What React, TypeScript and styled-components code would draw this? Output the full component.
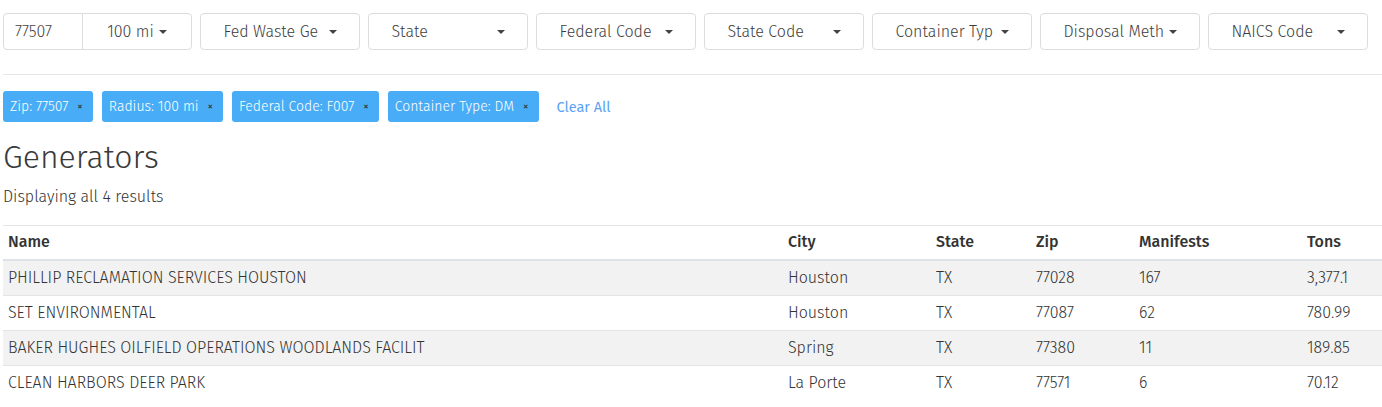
import React from "react";
import styled, { createGlobalStyle } from "styled-components";

const GlobalStyle = createGlobalStyle`
  html, body {
    margin: 0;
    padding: 0;
    background: #fff;
  }
  body {
    font-family: "Fira Sans", "Noto Sans", "Open Sans", sans-serif;
    color: #444;
    overflow: hidden;
  }
`;

interface Generator {
  name: string;
  city: string;
  state: string;
  zip: string;
  manifests: number;
  tons: string;
}

const generators: Generator[] = [
  { name: "PHILLIP RECLAMATION SERVICES HOUSTON", city: "Houston", state: "TX", zip: "77028", manifests: 167, tons: "3,377.1" },
  { name: "SET ENVIRONMENTAL", city: "Houston", state: "TX", zip: "77087", manifests: 62, tons: "780.99" },
  { name: "BAKER HUGHES OILFIELD OPERATIONS WOODLANDS FACILIT", city: "Spring", state: "TX", zip: "77380", manifests: 11, tons: "189.85" },
  { name: "CLEAN HARBORS DEER PARK", city: "La Porte", state: "TX", zip: "77571", manifests: 6, tons: "70.12" },
];

const filters = ["Fed Waste Ge", "State", "Federal Code", "State Code", "Container Typ", "Disposal Meth", "NAICS Code"];

const chips = ["Zip: 77507", "Radius: 100 mi", "Federal Code: F007", "Container Type: DM"];

const columns = [
  { label: "Name", width: 780 },
  { label: "City", width: 148 },
  { label: "State", width: 100 },
  { label: "Zip", width: 103 },
  { label: "Manifests", width: 168 },
  { label: "Tons", width: 80 },
];

const Page = styled.div`
  padding: 13px 0 0 3px;
`;

const FilterBar = styled.div`
  display: flex;
  gap: 8px;
`;

const ZipGroup = styled.div`
  display: flex;
`;

const ZipInput = styled.div`
  width: 80px;
  height: 37px;
  box-sizing: border-box;
  border: 1px solid #dcdcdc;
  border-radius: 4px 0 0 4px;
  font-size: 16px;
  font-weight: 300;
  line-height: 35px;
  padding-left: 11px;
  color: #444;
`;

const DropButton = styled.button<{ $joined?: boolean; $w: number }>`
  width: ${(p) => p.$w}px;
  height: 37px;
  box-sizing: border-box;
  background: #fff;
  border: 1px solid #dcdcdc;
  border-radius: ${(p) => (p.$joined ? "0 4px 4px 0" : "4px")};
  margin-left: ${(p) => (p.$joined ? "-1px" : "0")};
  display: flex;
  align-items: center;
  justify-content: center;
  gap: 5px;
  padding: 0;
  font-family: inherit;
  font-size: 16px;
  font-weight: 300;
  color: #3d3d3d;
`;

const ButtonLabel = styled.span<{ $fixed?: boolean }>`
  display: inline-block;
  width: ${(p) => (p.$fixed ? "100px" : "auto")};
  white-space: nowrap;
  overflow: hidden;
  text-align: left;
`;

const Caret = styled.span`
  width: 0;
  height: 0;
  border-top: 4.5px solid #444;
  border-left: 4px solid transparent;
  border-right: 4px solid transparent;
  margin-top: 1px;
`;

const Rule = styled.hr`
  border: 0;
  border-top: 1px solid #e6e6e6;
  margin: 24px 0 0;
`;

const ChipRow = styled.div`
  display: flex;
  align-items: center;
  gap: 9px;
  margin-top: 16px;
`;

const Chip = styled.span`
  display: inline-flex;
  align-items: center;
  height: 31px;
  padding: 0 10px 0 7px;
  background: #48acf6;
  border-radius: 3px;
  color: #fff;
  font-size: 14px;
  font-weight: 300;
`;

const ChipClose = styled.span`
  margin-left: 9px;
  font-size: 11px;
  font-weight: 400;
  color: #333;
`;

const ClearAll = styled.a`
  margin-left: 9px;
  color: #5aa2f5;
  font-size: 14.5px;
  text-decoration: none;
`;

const Title = styled.h1`
  margin: 15px 0 0;
  font-size: 32px;
  font-weight: 300;
  line-height: 40px;
  color: #3a3a3a;
`;

const Summary = styled.p`
  margin: 10px 0 0;
  font-size: 16px;
  font-weight: 300;
  line-height: 20px;
  color: #333;
`;

const Table = styled.table`
  margin-top: 18px;
  width: 1379px;
  border-collapse: collapse;
  table-layout: fixed;
  font-size: 16px;
`;

const HeadCell = styled.th`
  text-align: left;
  font-weight: 500;
  color: #333;
  padding: 7px 5px 8px;
  line-height: 18px;
  border-top: 1px solid #e2e4e6;
  border-bottom: 2px solid #dee2e6;
`;

const Row = styled.tr<{ $striped: boolean }>`
  background: ${(p) => (p.$striped ? "#f2f2f2" : "#fff")};
`;

const Cell = styled.td`
  padding: 8px 5px;
  line-height: 18px;
  font-weight: 300;
  color: #333;
  border-top: 1px solid #e2e4e6;
  white-space: nowrap;
  overflow: hidden;
`;

export default function App() {
  return (
    <Page>
      <GlobalStyle />
      <FilterBar>
        <ZipGroup>
          <ZipInput>77507</ZipInput>
          <DropButton $joined $w={110}>
            <ButtonLabel>100 mi</ButtonLabel>
            <Caret />
          </DropButton>
        </ZipGroup>
        {filters.map((f) => (
          <DropButton key={f} $w={160}>
            <ButtonLabel $fixed>{f}</ButtonLabel>
            <Caret />
          </DropButton>
        ))}
      </FilterBar>
      <Rule />
      <ChipRow>
        {chips.map((c) => (
          <Chip key={c}>
            {c}
            <ChipClose>×</ChipClose>
          </Chip>
        ))}
        <ClearAll href="#">Clear All</ClearAll>
      </ChipRow>
      <Title>Generators</Title>
      <Summary>Displaying all 4 results</Summary>
      <Table>
        <colgroup>
          {columns.map((c) => (
            <col key={c.label} style={{ width: c.width }} />
          ))}
        </colgroup>
        <thead>
          <tr>
            {columns.map((c) => (
              <HeadCell key={c.label}>{c.label}</HeadCell>
            ))}
          </tr>
        </thead>
        <tbody>
          {generators.map((g, i) => (
            <Row key={g.name} $striped={i % 2 === 0}>
              <Cell>{g.name}</Cell>
              <Cell>{g.city}</Cell>
              <Cell>{g.state}</Cell>
              <Cell>{g.zip}</Cell>
              <Cell>{g.manifests}</Cell>
              <Cell>{g.tons}</Cell>
            </Row>
          ))}
        </tbody>
      </Table>
    </Page>
  );
}
